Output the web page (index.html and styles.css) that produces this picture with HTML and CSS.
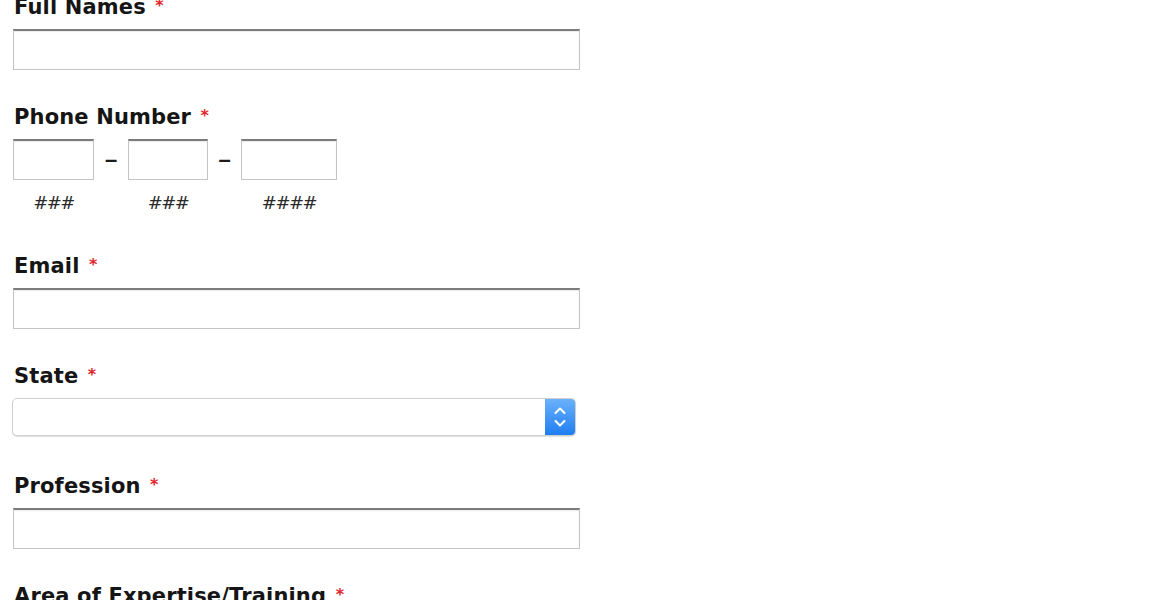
FILE: index.html
```html
<!DOCTYPE html>
<html>
<head>
<meta charset="utf-8">
<link rel="stylesheet" href="styles.css">
</head>
<body>
<form class="form">
  <div class="field">
    <label class="label">Full Names <span class="req">*</span></label>
    <input class="text" type="text">
  </div>
  <div class="field">
    <label class="label">Phone Number <span class="req">*</span></label>
    <div class="phone">
      <input class="text" type="text">
      <span class="dash">–</span>
      <input class="text" type="text">
      <span class="dash">–</span>
      <input class="text" type="text">
      <span class="hint">###</span>
      <span></span>
      <span class="hint">###</span>
      <span></span>
      <span class="hint">####</span>
    </div>
  </div>
  <div class="field">
    <label class="label">Email <span class="req">*</span></label>
    <input class="text" type="text">
  </div>
  <div class="field">
    <label class="label">State <span class="req">*</span></label>
    <div class="select">
      <span class="select-btn">
        <svg width="14" height="26" viewBox="0 0 14 26">
          <path d="M2.5 9 L7 4.5 L11.5 9" fill="none" stroke="#fff" stroke-width="2" stroke-linecap="round" stroke-linejoin="round"/>
          <path d="M2.5 17 L7 21.5 L11.5 17" fill="none" stroke="#fff" stroke-width="2" stroke-linecap="round" stroke-linejoin="round"/>
        </svg>
      </span>
    </div>
  </div>
  <div class="field">
    <label class="label">Profession <span class="req">*</span></label>
    <input class="text" type="text">
  </div>
  <div class="field">
    <label class="label">Area of Expertise/Training <span class="req">*</span></label>
    <input class="text" type="text">
  </div>
</form>
</body>
</html>
```
FILE: styles.css
```css
html, body {
  margin: 0;
  padding: 0;
  background: #fff;
  overflow: hidden;
}
.form {
  margin: -8px 0 0 0;
  padding: 0 0 0 13px;
  display: flex;
  flex-direction: column;
  gap: 32px;
  font-family: "DejaVu Sans", Verdana, sans-serif;
}
.field {
  display: flex;
  flex-direction: column;
  align-items: flex-start;
}
.label {
  display: block;
  box-sizing: border-box;
  height: 26px;
  padding-top: 2px;
  font-size: 21px;
  line-height: 26px;
  font-weight: bold;
  color: #151515;
  margin: 0 0 11px 1px;
  letter-spacing: 0.15px;
}
.req {
  color: #e0262b;
  font-size: 16px;
  line-height: 0;
  vertical-align: 3px;
  margin-left: 2px;
}
.text {
  box-sizing: border-box;
  width: 567px;
  height: 41px;
  margin: 0;
  padding: 0 6px;
  border: 1px solid #c4c4c4;
  border-top: 2px solid #7c7c7c;
  box-shadow: inset 0 1px 1px rgba(0,0,0,0.08);
  background: #fff;
  font-size: 16px;
  outline: none;
}
.phone {
  display: grid;
  grid-template-columns: 81px 34px 80px 33px 96px;
  grid-template-rows: 41px auto;
  align-items: center;
}
.phone .text {
  width: 100%;
}
.dash {
  text-align: center;
  font-family: "Liberation Sans", Arial, sans-serif;
  font-size: 22px;
  font-weight: bold;
  color: #1a1a1a;
  line-height: 41px;
}
.hint {
  text-align: center;
  font-size: 18px;
  line-height: 20px;
  letter-spacing: -1.5px;
  color: #2a2a2a;
  margin-top: 13px;
  margin-bottom: 6px;
}
.select {
  box-sizing: border-box;
  width: 564px;
  height: 38px;
  margin: 0 0 3px -1px;
  border: 1px solid #cfcfcf;
  border-radius: 5px;
  background: #fff;
  box-shadow: 0 1px 1px rgba(0,0,0,0.12);
  display: flex;
  justify-content: flex-end;
  overflow: hidden;
}
.select-btn {
  width: 30px;
  height: 100%;
  background: linear-gradient(#6bb1fb, #1f7ef2);
  display: flex;
  align-items: center;
  justify-content: center;
}
```
